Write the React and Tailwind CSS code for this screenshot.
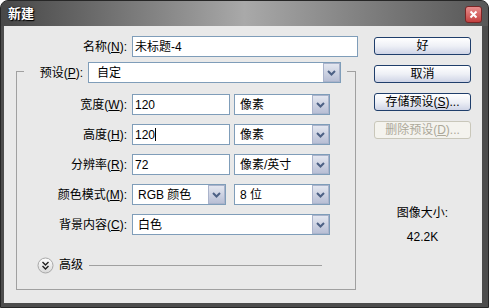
import React from 'react';

const font = "font-['Liberation_Sans','Noto_Sans_CJK_SC',sans-serif]";

function Arrow() {
  return (
    <div className="w-[17px] h-full bg-linear-to-b from-[#e4e7f0] to-[#b8bfd5] border border-[#aab3cb] flex items-center justify-center">
      <svg width="9" height="6" viewBox="0 0 9 6">
        <path d="M1 1 L4.5 4.5 L8 1" stroke="#4d6185" strokeWidth="2" fill="none" />
      </svg>
    </div>
  );
}

function Select({ value, w, pad = 'pl-[5px]' }) {
  return (
    <div className={`h-[21px] ${w} border border-[#7f9db9] bg-white flex`}>
      <div className={`flex-1 flex items-center ${pad}`}>{value}</div>
      <Arrow />
    </div>
  );
}

function Input({ value, w, caret }) {
  return (
    <div className={`h-[21px] ${w} border border-[#7f9db9] bg-white flex items-center pl-[2px]`}>
      {value}
      {caret && <span className="w-px h-[13px] bg-black" />}
    </div>
  );
}

function Label({ text, k, w }) {
  return (
    <div className={`${w} text-right pr-[5px] shrink-0`}>
      {text}(<span className="underline">{k}</span>):
    </div>
  );
}

function Button({ children, disabled }) {
  return (
    <div
      className={
        disabled
          ? 'h-[18px] rounded-[3px] border border-[#c9c7ba] bg-[#f4f3ee] text-[#aca899] flex items-center justify-center'
          : 'h-[18px] rounded-[3px] border border-[#1f3e6b] bg-linear-to-b from-white via-[#eef0f6] to-[#cfd4e6] flex items-center justify-center'
      }
    >
      {children}
    </div>
  );
}

export default function App() {
  return (
    <div className={`w-[489px] h-[308px] bg-[#4d4d4d] rounded-t-[8px] border border-[#262626] flex flex-col text-[12px] text-black ${font}`}>
      <div className="h-[25px] shrink-0 flex items-center justify-between pl-[7px] pr-[6px] rounded-t-[7px] bg-linear-to-r from-[#474747] via-[#a9a9a9] to-[#575757]">
        <span className="text-white font-bold text-[13px] [text-shadow:0_0_2px_#000,1px_1px_1px_#000]">新建</span>
        <div className="w-[17px] h-[17px] mt-[2px] rounded-[3px] border border-[#7a2626] bg-linear-to-b from-[#e88d8d] to-[#c33f3f] flex items-center justify-center">
          <svg width="9" height="9" viewBox="0 0 9 9">
            <path d="M1.5 1.5 L7.5 7.5 M7.5 1.5 L1.5 7.5" stroke="#fff" strokeWidth="2" />
          </svg>
        </div>
      </div>

      <div className="flex-1 ml-[3px] mr-[6px] mb-[4px] bg-[#e9e9e9] flex pt-[10px]">
        <div className="w-[354px] flex flex-col">
          <div className="flex items-center h-[21px]">
            <Label text="名称" k="N" w="w-[128px]" />
            <Input value="未标题-4" w="w-[226px]" />
          </div>

          <div className="ml-[12px] mt-[14px] w-[340px] border-x border-b border-[#a0a0a0] flex flex-col pb-[16px]">
            <div className="flex items-start -mt-[9px] h-[21px]">
              <div className="w-[7px] h-px bg-[#a0a0a0] mt-[9px] shrink-0" />
              <div className="w-[64px] h-[21px] flex items-center justify-end pr-[5px] shrink-0">
                预设(<span className="underline">P</span>):
              </div>
              <Select value="自定" w="w-[253px]" pad="pl-[8px]" />
              <div className="flex-1 ml-[6px] h-px bg-[#a0a0a0] mt-[9px]" />
            </div>

            <div className="flex flex-col gap-[9px] mt-[11px]">
              <div className="flex items-center">
                <Label text="宽度" k="W" w="w-[115px]" />
                <Input value="120" w="w-[98px]" />
                <div className="ml-[4px]"><Select value="像素" w="w-[96px]" /></div>
              </div>
              <div className="flex items-center">
                <Label text="高度" k="H" w="w-[115px]" />
                <Input value="120" w="w-[98px]" caret />
                <div className="ml-[4px]"><Select value="像素" w="w-[96px]" /></div>
              </div>
              <div className="flex items-center">
                <Label text="分辨率" k="R" w="w-[115px]" />
                <Input value="72" w="w-[98px]" />
                <div className="ml-[4px]"><Select value="像素/英寸" w="w-[96px]" /></div>
              </div>
              <div className="flex items-center">
                <Label text="颜色模式" k="M" w="w-[115px]" />
                <Select value="RGB 颜色" w="w-[94px]" />
                <div className="ml-[8px]"><Select value="8 位" w="w-[96px]" /></div>
              </div>
              <div className="flex items-center">
                <Label text="背景内容" k="C" w="w-[115px]" />
                <Select value="白色" w="w-[198px]" />
              </div>
            </div>

            <div className="flex items-center mt-[22px] pl-[20px] h-[16px]">
              <svg width="17" height="17" viewBox="0 0 17 17">
                <defs>
                  <linearGradient id="adv" x1="0" y1="0" x2="0" y2="1">
                    <stop offset="0" stopColor="#ffffff" />
                    <stop offset="1" stopColor="#d8d8d8" />
                  </linearGradient>
                </defs>
                <circle cx="8.5" cy="8.5" r="7.5" fill="url(#adv)" stroke="#a8a8a8" />
                <path d="M5.5 5 L8.5 8 L11.5 5 M5.5 9 L8.5 12 L11.5 9" stroke="#222" strokeWidth="1.4" fill="none" />
              </svg>
              <span className="ml-[5px]">高级</span>
              <div className="ml-[6px] w-[233px] h-px bg-[#a0a0a0]" />
            </div>
          </div>
        </div>

        <div className="ml-[16px] w-[97px] flex flex-col pt-[1px]">
          <div className="flex flex-col gap-[10px]">
            <Button>好</Button>
            <Button>取消</Button>
            <Button>存储预设(<span className="underline">S</span>)...</Button>
            <Button disabled>删除预设(<span className="underline">D</span>)...</Button>
          </div>
          <div className="mt-[67px] text-center leading-[14px]">图像大小:</div>
          <div className="mt-[10px] text-center leading-[14px]">42.2K</div>
        </div>
      </div>
    </div>
  );
}
